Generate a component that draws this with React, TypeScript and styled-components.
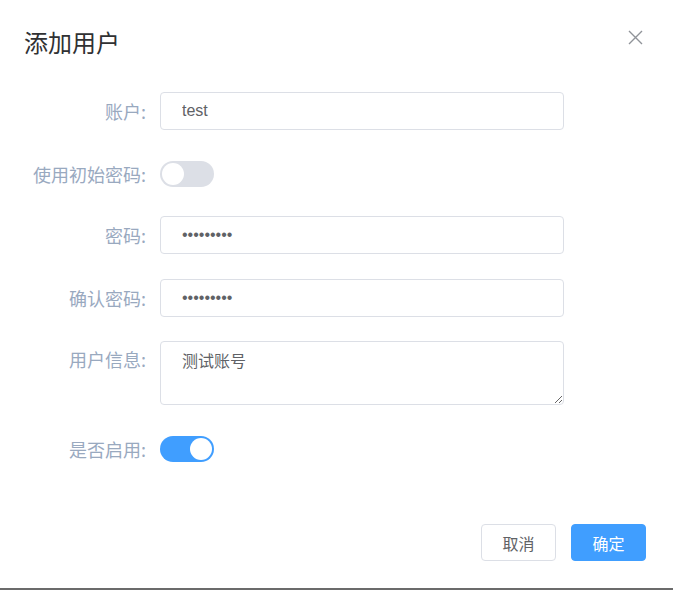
import React, { useState } from "react";
import styled, { createGlobalStyle } from "styled-components";

const Global = createGlobalStyle`
  html, body { margin: 0; padding: 0; background: #6b6b6b; }
  body { font-family: "Liberation Sans", "Noto Sans CJK SC", sans-serif; }
  * { box-sizing: border-box; }
`;

const Dialog = styled.div`
  width: 673px;
  height: 588px;
  background: #fff;
  display: flex;
  flex-direction: column;
`;

const Header = styled.div`
  display: flex;
  align-items: center;
  justify-content: space-between;
  padding: 24px 30px 0 24px;
  height: 60px;
`;

const Title = styled.div`
  font-size: 24px;
  line-height: 32px;
  color: #303133;
  font-family: "Noto Sans CJK SC", sans-serif;
`;

const Close = styled.button`
  border: none;
  background: transparent;
  padding: 0;
  width: 16px;
  height: 16px;
  display: flex;
  align-items: center;
  justify-content: center;
  cursor: pointer;
  margin-top: -10px;
`;

const Form = styled.div`
  display: flex;
  flex-direction: column;
  padding: 32px 109px 0 0;
`;

const Row = styled.div<{ $top?: boolean; $mt?: number }>`
  display: grid;
  grid-template-columns: 146px 1fr;
  column-gap: 14px;
  align-items: ${(p) => (p.$top ? "start" : "center")};
  min-height: 38px;
  margin-top: ${(p) => p.$mt ?? 0}px;
`;

const Label = styled.label<{ $top?: boolean }>`
  text-align: right;
  font-size: 18px;
  color: #99a9bf;
  font-family: "Noto Sans CJK SC", sans-serif;
  line-height: 24px;
  white-space: nowrap;
  padding-top: ${(p) => (p.$top ? "6px" : "0")};
`;

const Input = styled.input`
  width: 100%;
  height: 38px;
  border: 1px solid #dcdfe6;
  border-radius: 4px;
  padding: 0 21px;
  font-size: 16px;
  color: #606266;
  font-family: "Liberation Sans", "Noto Sans CJK SC", sans-serif;
  outline: none;
  background: #fff;
`;

const TextArea = styled.textarea`
  width: 100%;
  height: 64px;
  border: 1px solid #dcdfe6;
  border-radius: 4px;
  padding: 6px 21px;
  font-size: 16px;
  line-height: 24px;
  color: #606266;
  font-family: "Noto Sans CJK SC", sans-serif;
  outline: none;
  resize: vertical;
  display: block;
`;

const SwitchTrack = styled.button<{ $on: boolean }>`
  width: 54px;
  height: 26px;
  border-radius: 13px;
  border: none;
  padding: 0;
  display: block;
  background: ${(p) => (p.$on ? "#409eff" : "#dcdfe6")};
  position: relative;
  cursor: pointer;
`;

const Knob = styled.span<{ $on: boolean }>`
  position: absolute;
  top: 2px;
  left: ${(p) => (p.$on ? "30px" : "2px")};
  width: 22px;
  height: 22px;
  border-radius: 50%;
  background: #fff;
`;

const Footer = styled.div`
  margin-top: auto;
  display: flex;
  justify-content: flex-end;
  gap: 15px;
  padding: 0 27px 27px 0;
`;

const Button = styled.button<{ $primary?: boolean }>`
  height: 37px;
  width: 75px;
  border-radius: 4px;
  font-size: 16px;
  font-family: "Noto Sans CJK SC", sans-serif;
  cursor: pointer;
  border: 1px solid ${(p) => (p.$primary ? "#409eff" : "#dcdfe6")};
  background: ${(p) => (p.$primary ? "#409eff" : "#fff")};
  color: ${(p) => (p.$primary ? "#fff" : "#606266")};
`;

function Switch({ on, onToggle }: { on: boolean; onToggle: () => void }) {
  return (
    <SwitchTrack $on={on} onClick={onToggle}>
      <Knob $on={on} />
    </SwitchTrack>
  );
}

export default function App() {
  const [initPwd, setInitPwd] = useState(false);
  const [enabled, setEnabled] = useState(true);
  return (
    <>
      <Global />
      <Dialog>
        <Header>
          <Title>添加用户</Title>
          <Close aria-label="close">
            <svg width="15" height="15" viewBox="0 0 15 15">
              <path d="M1 1L14 14M14 1L1 14" stroke="#909399" strokeWidth="1.4" fill="none" />
            </svg>
          </Close>
        </Header>
        <Form>
          <Row>
            <Label>账户:</Label>
            <Input defaultValue="test" />
          </Row>
          <Row $mt={25}>
            <Label>使用初始密码:</Label>
            <div>
              <Switch on={initPwd} onToggle={() => setInitPwd(!initPwd)} />
            </div>
          </Row>
          <Row $mt={23}>
            <Label>密码:</Label>
            <Input type="password" defaultValue="123456789" />
          </Row>
          <Row $mt={25}>
            <Label>确认密码:</Label>
            <Input type="password" defaultValue="123456789" />
          </Row>
          <Row $top $mt={24}>
            <Label $top>用户信息:</Label>
            <TextArea defaultValue="测试账号" />
          </Row>
          <Row $mt={25}>
            <Label>是否启用:</Label>
            <div>
              <Switch on={enabled} onToggle={() => setEnabled(!enabled)} />
            </div>
          </Row>
        </Form>
        <Footer>
          <Button>取消</Button>
          <Button $primary>确定</Button>
        </Footer>
      </Dialog>
    </>
  );
}
